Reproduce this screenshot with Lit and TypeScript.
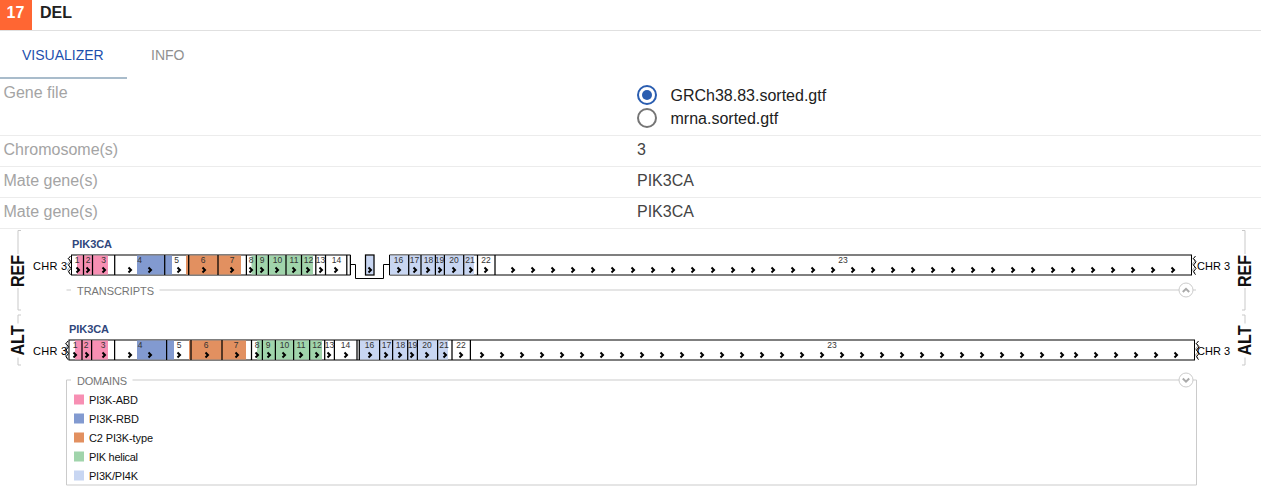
import { LitElement, html, svg, css } from "lit";
import { customElement, state } from "lit/decorators.js";

interface Track {
  x0: number;
  x1: number;
  top: number;
  lines: number[];
  fills: [number, number, string][];
  labels: [string, number][];
  arrows: number[];
  runs: [number, number][];
}

const PINK = "#f78fb3";
const BLUE = "#829ad0";
const ORANGE = "#e29060";
const GREEN = "#a0d4ab";
const PALE = "#c8d6f2";

const REF: Track = {
  x0: 71.5, x1: 1191.5, top: 255,
  lines: [83.5, 92.5, 114.7, 164.7, 188.7, 218, 246.4, 256.4, 268.4, 286, 301.5, 315.8, 325.5, 346.8, 350.4, 408.7, 421, 435.4, 444.4, 463.7, 477.5, 495],
  fills: [[77, 108, PINK], [137, 172, BLUE], [186, 241, ORANGE], [251.5, 313, GREEN], [365.5, 374.3, PALE], [389.3, 474, PALE]],
  labels: [["1", 77], ["2", 88], ["3", 103.5], ["4", 139.5], ["5", 176.5], ["6", 203], ["7", 232], ["8", 251], ["9", 262], ["10", 277.5], ["11", 294], ["12", 308.5], ["13", 320.5], ["14", 336.5], ["16", 398.5], ["17", 414.5], ["18", 428.5], ["19", 439.5], ["20", 454], ["21", 470], ["22", 486], ["23", 843]],
  arrows: [78, 88, 104, 130, 150, 179, 204, 232, 251, 262, 277, 294, 308, 321, 336, 370, 399, 415, 428, 440, 454, 471, 486],
  runs: [[513, 34]],
};

const ALT: Track = {
  x0: 69, x1: 1194.5, top: 340,
  lines: [82, 91.6, 114.6, 166.6, 191, 222, 251.5, 262.4, 275.4, 293.6, 309.6, 324.7, 334.4, 357, 359.3, 379.6, 392.6, 407.7, 417.4, 437.6, 452, 470.4],
  fills: [[75, 108, PINK], [137, 174, BLUE], [189, 246, ORANGE], [257, 322, GREEN], [359.3, 448, PALE]],
  labels: [["1", 75], ["2", 86], ["3", 103], ["4", 140], ["5", 179], ["6", 206], ["7", 236], ["8", 257], ["9", 268], ["10", 284.5], ["11", 301], ["12", 317], ["13", 329.5], ["14", 345.5], ["16", 369.5], ["17", 386.5], ["18", 400.5], ["19", 412.5], ["20", 427], ["21", 444], ["22", 461], ["23", 832]],
  arrows: [75, 87, 104, 130, 150, 179, 207, 237, 257, 269, 284, 301, 317, 329, 346, 370, 386, 400, 412, 427, 445, 461],
  runs: [[482, 30], [1076, 6]],
};

@customElement("app-root")
export class AppRoot extends LitElement {
  static styles = css`
    :host { display: block; height: 503px; overflow: hidden; background: #fff; color: #212121; font-family: "Liberation Sans", Arial, sans-serif; }
    .header { display: flex; height: 30px; border-bottom: 1px solid #e0e0e0; font-weight: bold; font-size: 16px; line-height: 25px; }
    .badge { width: 32px; background: #ff6633; color: #fff; text-align: center; padding-right: 1px; box-sizing: border-box; }
    .name { padding-left: 8px; }
    .tabs { display: flex; height: 48px; font-size: 14px; line-height: 49px; color: #909090; }
    .tab { padding: 0 24px; height: 48px; box-sizing: border-box; }
    .active { width: 127px; padding: 0 0 0 22px; color: #1d4fad; border-bottom: 2px solid #a9bccb; }
    .row { display: grid; grid-template-columns: 634px 1fr; height: 30px; border-bottom: 1px solid #ececec; font-size: 16px; line-height: 27px; }
    .first { height: 56px; }
    .key { color: #a4a4a4; padding-left: 3.5px; }
    .value { padding-left: 3px; color: #444; }
    .options { padding-top: 5px; color: #212121; }
    .option { display: flex; align-items: center; gap: 13.5px; height: 23px; line-height: 23px; cursor: pointer; }
    .radio { box-sizing: border-box; width: 20px; height: 20px; border: 2px solid #757575; border-radius: 50%; display: grid; place-items: center; }
    .on { border-color: #2a5db0; }
    .on::after { content: ""; width: 10px; height: 10px; border-radius: 50%; background: #2a5db0; }
    .options .radio { margin-top: -1px; }
    .canvas { display: block; }
    .track { fill: #fff; stroke: #000; stroke-width: 1; }
    .line { fill: none; stroke: #000; stroke-width: 1.25; }
    .arrow { fill: none; stroke: #000; stroke-width: 2; }
    .exon { font-size: 8.5px; text-anchor: middle; fill: #333; }
    .chr { font-size: 11px; fill: #000; }
    .gene { font-size: 11px; font-weight: bold; fill: #30477c; }
    .side { font-size: 18px; font-weight: bold; fill: #111; text-anchor: middle; }
    .bracket { fill: none; stroke: #c9c9c9; }
    .frame { fill: none; stroke: #cbcbcb; }
    .legend { font-size: 11px; fill: #111; }
    .caption { font-size: 11px; fill: #757575; }
    .toggle { fill: #fff; stroke: #ccc; }
    .chevron { fill: none; stroke: #aaa; stroke-width: 2; }
    .zig { fill: none; stroke: #000; stroke-width: 1; }
    .faint { stroke: #999; }
  `;

  @state() private file = 0;

  private zig(x: number, y: number) {
    return svg`<path class="zig faint" d=${`M${x - 1} ${y + 3}l2.5 3l-2.5 3l2.5 3l-2.5 3l2.5 3`}></path>
      <path class="zig" d=${`M${x + 2} ${y + 1}l-2 2.5l2.5 3.3l-2.5 3.3l2.5 3.3l-2.5 3.3l2 3`}></path>`;
  }

  private track(t: Track, gap: boolean) {
    const y = t.top;
    const arrows = [...t.arrows, ...t.runs.flatMap(([start, n]) => Array.from({ length: n }, (_, i) => start + 20 * i))];
    return svg`
      ${this.zig(t.x0 - 3, y)}
      ${this.zig(t.x1 + 2, y)}
      <rect class="track" x=${t.x0} y=${y} width=${t.x1 - t.x0} height="20"></rect>
      ${gap ? svg`<rect x="350.5" y="254" width="39" height="22" fill="#fff"></rect>` : ""}
      ${t.fills.map(([a, b, c]) => svg`<rect x=${a} y=${y + 0.5} width=${b - a} height="19" fill=${c}></rect>`)}
      ${t.lines.map((x) => svg`<path class="line" d=${`M${x} ${y}v20`}></path>`)}
      ${gap ? svg`<rect class="line" x="365.5" y="255" width="8.5" height="20"></rect>
        <path class="zig" d="M350.5 264.5H355.5V278.5H383.5V264.5H389.5M389.5 255V275"></path>` : ""}
      ${arrows.map((x) => svg`<path class="arrow" d=${`M${x - 1.5} ${y + 12.5}L${x + 1} ${y + 15}L${x - 1.5} ${y + 17.5}`}></path>`)}
      ${t.labels.map(([s, x]) => svg`<text class="exon" x=${x} y=${y + 8}>${s}</text>`)}
      <text class="chr" x="33" y=${y + 15} textLength="34">CHR 3</text>
      <text class="chr" x="1197" y=${y + 15} textLength="33">CHR 3</text>
      <text class="gene" x=${gap ? 72 : 69} y=${y - 7} textLength="40">PIK3CA</text>`;
  }

  private side(x: number, inward: number, top: number, bottom: number, label: string) {
    const c = label === "REF" ? 271 : 340.5;
    const size = label === "REF" ? 32 : 30;
    return svg`<path class="bracket" d=${`M${x + inward} ${top}H${x}V${bottom}H${x + inward}`}></path>
      <rect x=${x - 7} y=${c - 17} width="14" height="34" fill="#fff"></rect>
      <text class="side" textLength=${size} lengthAdjust="spacingAndGlyphs" transform=${`translate(${x + 6} ${c}) rotate(-90)`}>${label}</text>`;
  }

  private toggle(y: number, up: boolean) {
    return svg`<circle class="toggle" cx="1186" cy=${y} r="7"></circle>
      <path class="chevron" d=${up ? `M1182.8 ${y + 2}l3.2-3.2l3.2 3.2` : `M1182.8 ${y - 1.5}l3.2 3.2l3.2-3.2`}></path>`;
  }

  render() {
    const rows = [["Chromosome(s)", "3"], ["Mate gene(s)", "PIK3CA"], ["Mate gene(s)", "PIK3CA"]];
    const domains = [["PI3K-ABD", PINK], ["PI3K-RBD", BLUE], ["C2 PI3K-type", ORANGE], ["PIK helical", GREEN], ["PI3K/PI4K", PALE]];
    return html`
      <div class="header"><div class="badge">17</div><div class="name">DEL</div></div>
      <div class="tabs"><div class="tab active">VISUALIZER</div><div class="tab">INFO</div></div>
      <div class="row first"><div class="key">Gene file</div>
        <div class="value options">
          ${["GRCh38.83.sorted.gtf", "mrna.sorted.gtf"].map((f, i) => html`
            <div class="option" @click=${() => (this.file = i)}><span class="radio ${this.file === i ? "on" : ""}"></span><span>${f}</span></div>`)}
        </div>
      </div>
      ${rows.map(([k, v]) => html`<div class="row"><div class="key">${k}</div><div class="value">${v}</div></div>`)}
      <svg class="canvas" width="1261" height="274" viewBox="0 229 1261 274">
        ${this.side(18, 3, 230.5, 310, "REF")}
        ${this.side(18, 3, 315, 365, "ALT")}
        ${this.side(1245, -3, 230.5, 310, "REF")}
        ${this.side(1245, -3, 315, 365, "ALT")}
        ${this.track(REF, true)}
        ${this.track(ALT, false)}
        <path class="frame" d="M66.5 290H71M159.5 290H1196"></path>
        <text class="caption" x="77" y="295" textLength="77">TRANSCRIPTS</text>
        ${this.toggle(290, true)}
        <path class="frame" d="M71 380H66.5V485H1196.5V380H132.5"></path>
        <text class="caption" x="77" y="385" textLength="50">DOMAINS</text>
        ${this.toggle(380, false)}
        ${domains.map(([n, c], i) => svg`<rect x="74" y=${394.5 + 19 * i} width="10" height="10" fill=${c}></rect>
          <text class="legend" x="89" y=${404 + 19 * i} textLength=${[49, 50, 64, 49, 49][i]}>${n}</text>`)}
      </svg>`;
  }
}
